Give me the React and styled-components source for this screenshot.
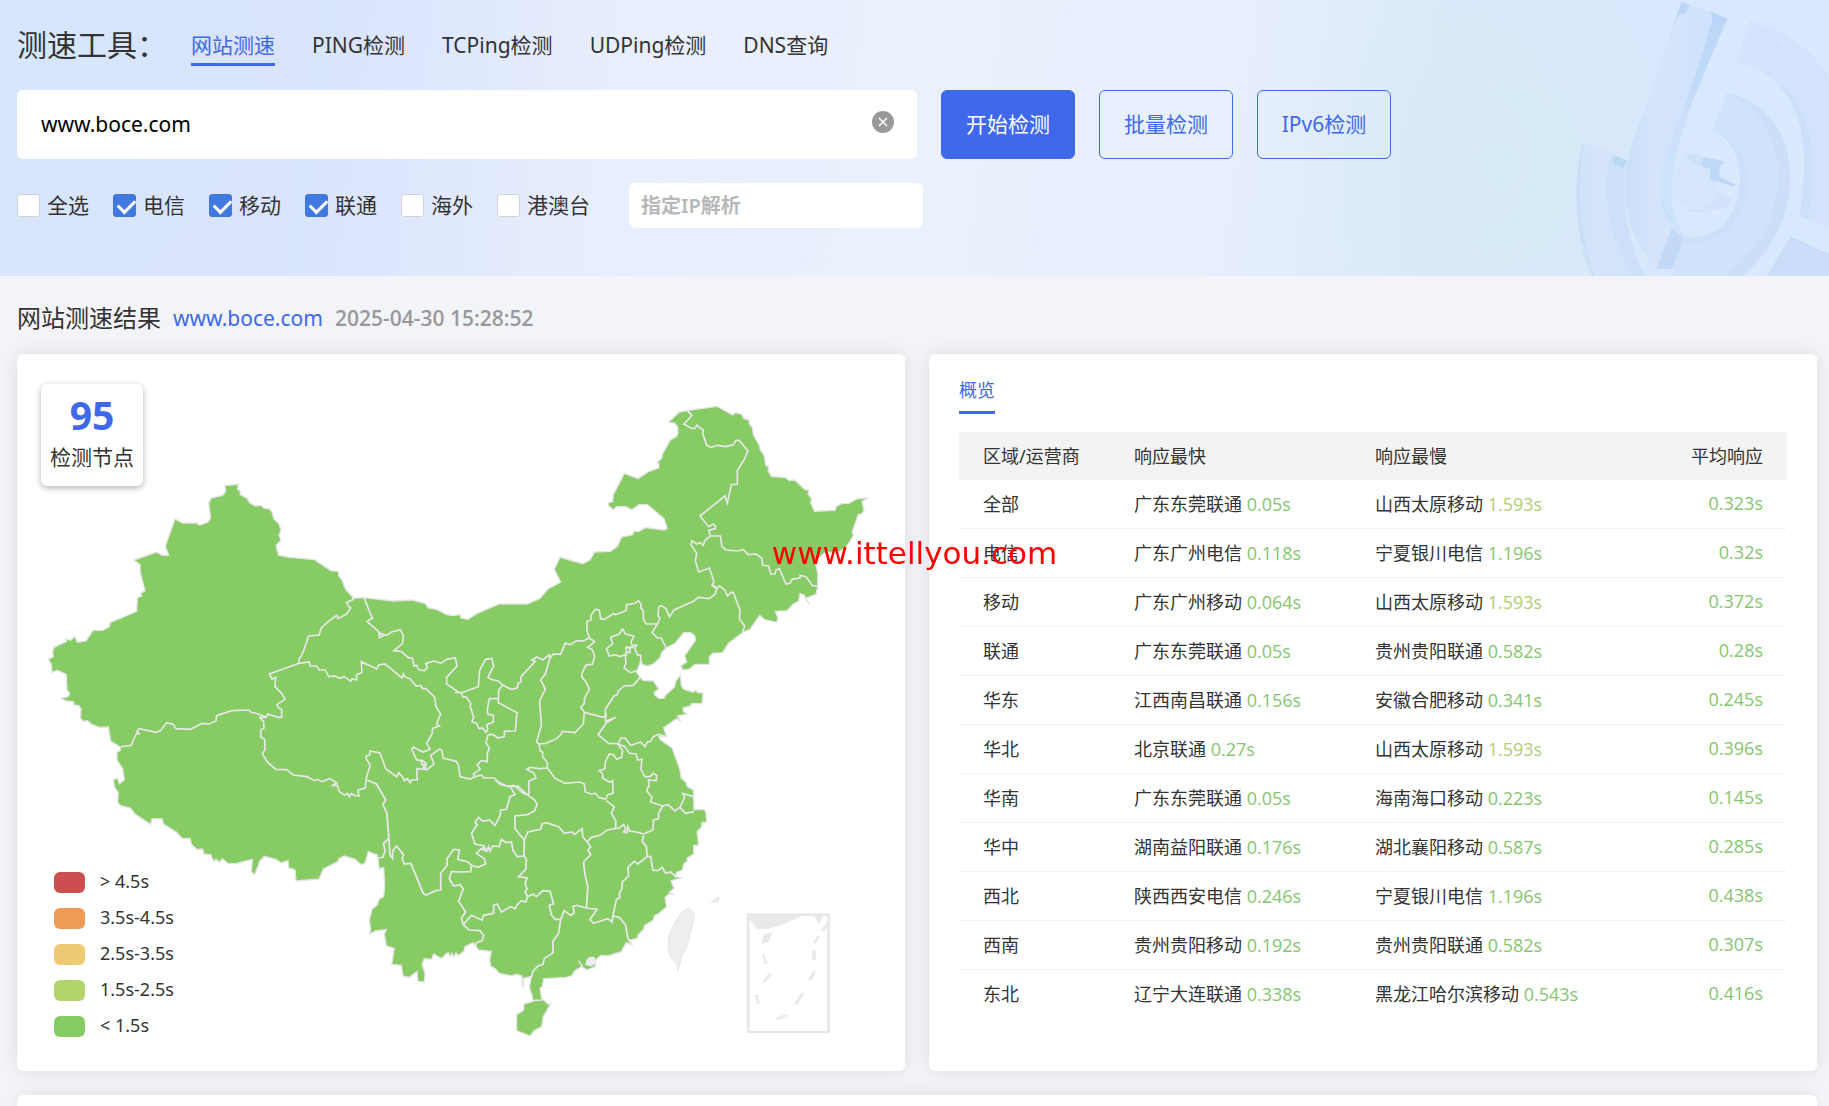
import { useState } from "react";
import styled, { createGlobalStyle } from "styled-components";

const tabs = ["网站测速", "PING检测", "TCPing检测", "UDPing检测", "DNS查询"];

const lines = ["电信", "移动", "联通", "海外", "港澳台"];

const levels = [
  { color: "#cb4f4f", text: "> 4.5s" },
  { color: "#ef9b55", text: "3.5s-4.5s" },
  { color: "#efca74", text: "2.5s-3.5s" },
  { color: "#b3d468", text: "1.5s-2.5s" },
  { color: "#86cb63", text: "< 1.5s" },
];

const rows = [
  { area: "全部", fast: ["广东东莞联通", 0.05], slow: ["山西太原移动", 1.593], avg: 0.323 },
  { area: "电信", fast: ["广东广州电信", 0.118], slow: ["宁夏银川电信", 1.196], avg: 0.32 },
  { area: "移动", fast: ["广东广州移动", 0.064], slow: ["山西太原移动", 1.593], avg: 0.372 },
  { area: "联通", fast: ["广东东莞联通", 0.05], slow: ["贵州贵阳联通", 0.582], avg: 0.28 },
  { area: "华东", fast: ["江西南昌联通", 0.156], slow: ["安徽合肥移动", 0.341], avg: 0.245 },
  { area: "华北", fast: ["北京联通", 0.27], slow: ["山西太原移动", 1.593], avg: 0.396 },
  { area: "华南", fast: ["广东东莞联通", 0.05], slow: ["海南海口移动", 0.223], avg: 0.145 },
  { area: "华中", fast: ["湖南益阳联通", 0.176], slow: ["湖北襄阳移动", 0.587], avg: 0.285 },
  { area: "西北", fast: ["陕西西安电信", 0.246], slow: ["宁夏银川电信", 1.196], avg: 0.438 },
  { area: "西南", fast: ["贵州贵阳移动", 0.192], slow: ["贵州贵阳联通", 0.582], avg: 0.307 },
  { area: "东北", fast: ["辽宁大连联通", 0.338], slow: ["黑龙江哈尔滨移动", 0.543], avg: 0.416 },
];

// 全国轮廓
const outline =
  "145,958 160,950 158,935 162,922 200,904 197,896 212,901 224,889 232,907 258,903 279,871 308,871 328,860 330,848 410,814 412,774 425,768 422,760 435,752 421,698 420,674 402,660 470,636 487,646 506,646 496,619 525,537 548,549 590,549 599,556 624,546 632,534 626,489 634,474 668,466 677,454 675,437 716,433 712,446 722,456 720,463 741,475 750,489 766,498 784,496 792,505 806,506 816,515 821,536 837,552 843,570 837,585 843,601 829,615 830,628 837,646 869,652 944,659 992,692 1015,694 1016,708 1024,717 1037,748 1058,771 " +
  "1060,775 1092,773 1180,783 1236,780 1275,790 1285,804 1312,809 1338,823 1358,827 1381,824 1383,834 1404,838 1430,821 1498,792 1581,792 1620,775 1644,747 1682,726 1663,688 1680,652 1748,671 1770,660 1784,636 1832,634 1853,618 1865,591 1898,584 1902,573 1915,575 1937,563 1992,570 2002,565 1992,536 1942,494 1917,494 1896,509 1877,500 1850,500 1840,509 1826,498 1825,488 1838,485 1840,464 1873,400 1914,416 1945,395 1976,384 1977,372 1972,368 1986,353 1987,343 2010,301 2030,289 2034,280 2033,260 2024,250 2006,246 2037,217 2060,212 2152,199 2198,225 2207,218 2225,223 2232,236 2248,241 2247,250 2257,263 2260,285 2279,318 2280,328 2293,348 2297,376 2306,380 2304,392 2315,410 2355,412 2368,422 2384,420 2415,449 2427,451 2424,461 2435,477 2432,488 2444,514 2506,511 2508,500 2525,491 2547,490 2570,477 2605,473 2586,484 2592,512 2586,521 2575,523 2557,575 2560,587 2540,620 2510,640 2478,635 2446,662 2453,700 2453,740 2448,763 2416,775 2428,792 2412,765 2400,760 2396,784 2380,792 2361,812 2326,814 2334,835 2330,847 2294,839 2279,826 2250,868 2230,876 2185,910 2168,938 2137,940 2128,952 2128,973 2085,973 2067,988 2048,990 2043,978 2060,966 2054,947 2086,902 2085,888 2072,878 2051,878 2025,910 1998,924 1985,938 1980,953 1960,972 1943,978 1927,974 1923,962 1909,996 1928,1021 1960,1023 1976,1047 1963,1056 1964,1065 1976,1075 1992,1075 1998,1064 2024,1040 2027,1024 2041,1005 2044,1038 2052,1048 2080,1057 2088,1050 2092,1057 2109,1060 2106,1091 2075,1090 2071,1098 2049,1103 2050,1115 2061,1122 2033,1128 2042,1145 2030,1136 1991,1163 2000,1190 1977,1190 1980,1198 2017,1225 2040,1290 2044,1315 2058,1327 2062,1340 2080,1350 2082,1409 2113,1409 2118,1418 " +
  "2120,1447 2106,1447 2105,1461 2091,1475 2096,1515 2081,1517 2081,1542 2061,1555 2062,1563 2051,1572 2047,1591 2029,1597 2027,1608 2044,1615 2027,1618 2013,1623 2022,1645 2008,1657 2023,1664 2006,1662 1995,1673 2000,1700 1977,1720 1963,1727 1960,1740 1933,1757 1931,1768 1914,1785 1911,1795 1890,1800 1896,1815 1879,1807 1864,1835 1824,1848 1802,1846 1787,1860 1785,1880 1761,1890 1749,1882 1736,1862 1746,1880 1724,1892 1716,1907 1699,1912 1631,1916 1627,1940 1620,1944 1625,1975 1648,1995 1654,1988 1629,2032 1625,2060 1602,2072 1590,2088 1550,2072 1550,2024 1571,2010 1572,1992 1599,1984 1596,1965 1588,1942 1594,1910 1569,1915 1571,1942 1566,1930 1566,1908 1550,1903 1534,1907 1498,1900 1486,1886 1472,1878 1469,1860 1474,1834 1436,1830 1419,1808 1395,1820 1392,1834 1374,1847 1368,1838 1361,1852 1356,1840 1350,1850 1345,1838 1337,1842 1325,1856 1301,1842 1295,1858 1273,1856 1266,1872 1275,1900 1273,1926 1254,1924 1251,1895 1227,1912 1209,1908 1204,1876 1175,1873 1183,1825 1159,1817 1153,1783 1159,1769 1127,1773 1108,1782 1112,1768 1108,1740 1116,1708 1131,1695 1138,1677 1151,1670 1154,1635 1151,1582 1138,1587 1132,1545 " +
  "1105,1535 1095,1570 1083,1574 1065,1557 1032,1548 1017,1556 1013,1565 970,1587 957,1617 888,1623 885,1589 866,1584 864,1562 844,1569 828,1558 793,1549 780,1562 764,1604 754,1595 757,1558 730,1565 710,1571 685,1571 667,1556 658,1567 648,1558 642,1566 632,1544 612,1542 608,1527 590,1528 575,1514 570,1495 547,1496 530,1477 490,1452 487,1437 456,1436 452,1453 407,1424 391,1404 362,1397 353,1387 355,1358 344,1342 340,1320 352,1314 358,1331 373,1320 368,1286 351,1260 351,1237 360,1232 362,1222 332,1203 325,1161 298,1162 275,1153 262,1142 250,1144 241,1135 243,1107 237,1097 222,1095 220,1085 198,1083 183,1074 205,1070 209,1060 201,1050 199,1003 172,991 156,997 154,972";

// 省界，按片区分组
const westBorders = [
  "1058,771 1060,778 1040,788 1045,798 1052,804 1040,822 1014,836 1010,826 985,844 964,864 957,885 926,888 908,940 897,958 897,970",
  "897,970 808,1002 816,1018 827,1012 825,1040 845,1060 855,1078 831,1094 836,1104 845,1108 845,1132 835,1132 803,1122 799,1132 778,1132",
  "800,1132 766,1119 753,1117 747,1110 695,1112 650,1127 648,1143 628,1152 605,1150 572,1168 528,1166 518,1152 500,1149 481,1172 469,1177 418,1166 412,1172 418,1184 412,1176 400,1200 394,1216 364,1220",
  "778,1132 791,1144 792,1164 782,1170 783,1192 794,1198 795,1228 787,1242 804,1268 828,1288 860,1289 880,1305 921,1310 944,1322 953,1318 966,1325 990,1316 1010,1328 998,1336 1012,1336 1018,1355 1035,1366 1042,1360 1048,1371 1053,1361 1064,1366 1077,1368 1074,1350 1096,1344 1098,1318",
  "1098,1318 1103,1300 1111,1276 1098,1255 1098,1248 1109,1246 1110,1233 1140,1239 1157,1286 1190,1310 1196,1298 1209,1312 1213,1322 1222,1316 1231,1328 1234,1320 1252,1320 1250,1286 1275,1288 1278,1274 1265,1274 1265,1262 1250,1260 1235,1228 1240,1222 1269,1236 1290,1228 1280,1210 1296,1182 1298,1165 1318,1158 1310,1152 1322,1122 1308,1100 1304,1072 1278,1046 1268,1046 1262,1036 1248,1038 1230,1016 1214,1010 1210,1002 1206,1014 1165,980 1154,972 1136,975 1130,987 1084,965 1086,998 1070,1004 1070,1020 1056,1016 1052,1024 1033,1010 1020,1015 1005,1008 986,1010 976,990 957,990 950,978 930,978 928,966 897,970",
  "1092,773 1117,835 1101,844 1137,876 1138,893 1148,888 1140,880 1160,886 1174,876 1201,869 1210,886 1208,910 1182,932 1203,934 1226,954 1237,954 1242,978 1250,976 1257,990 1274,992 1282,982 1277,970 1303,963 1322,970 1340,958 1366,953 1371,978 1340,1012 1340,1032 1378,1058",
];

const northBorders = [
  "345,398 365,398 415,380 419,330 437,298 455,295 461,318 444,352 452,358 475,363 488,375",
  "488,375 476,390 475,428 531,458 526,513 493,514 493,530 473,534 460,524 444,524",
  "365,398 368,410 380,412 393,432 390,438 401,470 396,485 410,490 417,506 428,504 438,517 443,508 440,494 460,486 460,466 443,462 442,448 448,416 475,416",
  "488,375 512,388 532,384 534,370 543,366 543,350 586,304 576,300 590,291 608,300 629,284 629,296",
  "629,296 616,342 602,360 616,387 599,422 604,495 590,546 597,552",
  "629,296 640,282 662,283 675,250 692,254 710,242 730,243 748,234",
  "748,234 764,245 743,262 758,270 764,290 757,313 737,316 726,340 726,352 738,366 748,388 733,416 733,430 722,442 733,457",
  "733,457 730,492 705,518 666,514 664,522 650,536 617,550 597,552",
  "733,457 790,472 798,464 796,484 827,472 800,488 774,524 806,550 833,551",
  "796,468 796,448 822,408 832,404 835,393 852,378 880,376 900,352",
  "835,550 843,534 855,534 872,556 885,552 902,546 915,560 922,546 932,544 940,530 955,523 978,530",
  "444,524 438,548 448,565 442,580 442,605 424,602 412,614 420,628 400,642 404,650 425,645",
  "404,650 390,657 360,650 356,618 349,604 309,594 306,572 299,567 272,586 282,612 260,630 250,622 258,610 248,602 232,600",
  "425,645 430,654 463,654 475,666 505,680 520,676 526,680 552,702 567,703",
  "567,703 566,664 588,654 582,640 560,628 570,622 600,626 622,624",
  "597,552 600,572 608,576 608,590 622,608 622,624",
  "622,624 646,656 676,670 720,666 733,672 736,696 752,702 766,700 776,712 798,718",
  "798,718 803,704 819,700 818,662 808,666 788,654 788,642 778,632 795,626 796,606 808,582 820,584 830,598 845,592 848,572 833,551",
  "833,551 855,560 868,580 888,582 893,600 906,598 903,628 914,650 930,650 940,640 950,646 949,662 925,660 928,674 920,692 936,712 932,726 968,738",
  "968,738 985,734 1004,752 1020,742 1036,760 1062,755",
  "1020,742 1034,712 1028,700 1060,710",
  "848,206 856,222 882,228 873,246 878,262 858,262 860,284 838,290 828,284 808,288 799,266 818,252 812,232 838,222 848,206",
  "858,262 870,264 870,278 860,276 856,290 858,310 852,324 872,338 890,332",
  "878,256 890,256 884,264 892,284 902,286 902,304",
  "748,234 741,212 741,184 753,180 754,164 766,148 778,150 782,176 793,178 822,160 826,164 858,152 860,134 885,130 895,122 903,132 903,145 910,152 910,176 918,192 952,192",
];

const eastBorders = [
  "318,264 304,234 292,234 276,218 292,192 300,174 294,168 296,142 304,137 318,146 328,170 342,150 400,124 415,112 448,116 466,102 470,86 456,76",
  "470,86 478,78 495,90 502,108 512,98 520,98 540,150 538,176 554,198 548,216",
];

const northeastBorders = [
  "442,92 456,106 432,132 456,146 466,144 470,136 490,150 488,160 500,196 514,202 532,196 558,200 580,194 588,181 597,181 624,212 612,240 592,272 592,312 574,314 562,370 555,348 480,408 506,440 520,432 526,438 526,446 506,452 511,468",
  "511,468 541,468 546,500 558,510 594,513 610,508 624,524 648,522 665,534 668,556 686,558 692,582 705,582 708,570 718,566 738,612 750,610 756,598 780,594 780,586 798,590 818,618 835,618",
  "511,468 494,482 490,496 480,488 470,492 456,482 453,494 470,520 466,542 476,576 508,564 522,604 516,616 530,622",
];

const southBorders = [
  "75,0 102,12 128,60 120,74 131,98 137,175 140,225 147,235 148,212 158,198 178,224 174,236 180,252 198,250 214,290 232,338 240,346 268,332 282,330 282,280 300,256 300,236 318,208 334,210 330,238 358,246 368,256",
  "137,175 122,190 126,212 120,232 106,234",
  "368,256 366,275 330,276 312,274 306,296 318,318 336,314 345,326 332,364 352,396 340,414 345,434",
  "368,256 386,262 408,252 404,236 382,220 396,206 406,212",
  "406,212 404,198 378,192 368,160 384,134 378,128 388,112 400,124 418,120 434,136 448,108 450,90 466,88 476,50 490,44 478,22",
  "400,200 410,214 416,200 420,214 428,198 446,200 452,178 464,188 480,186 484,210 496,230 515,228",
  "435,0 450,14 478,20 498,18 524,44 545,60 552,74 545,92 524,104 490,108 490,146 516,180",
  "516,180 526,156 562,148 566,132 578,128 612,140 628,160 650,156 656,164 678,146 680,170 692,186",
  "516,180 515,228 522,238 520,268 500,290 524,294 518,310 524,328 518,334 525,350",
  "525,350 520,366 508,362 498,372 490,386 478,380 452,396 440,372 430,376 430,400 402,406 398,420 368,406 345,434",
  "345,434 362,450 392,452 402,466 398,482 382,488 380,500",
  "525,350 540,342 550,350 568,332 588,334 598,372 586,376 592,404 602,418 618,418",
  "618,418 612,460 596,484 597,518 572,536 568,554 554,558 540,574 536,592",
  "618,418 628,392 646,406 656,398 652,380 664,376 690,384",
  "692,186 702,200 694,210 702,224 682,246 686,284 694,320 690,384",
  "690,384 720,388 700,418 710,430 750,416 762,426 764,408",
  "692,186 704,172 728,166 748,150 772,146",
  "772,146 772,122 760,100 768,80 745,62",
  "772,146 782,144 794,134 800,146 794,156 804,158 806,140 812,154 830,156 850,162",
  "850,162 876,150 878,120 892,116 892,100 904,78",
  "850,166 846,184 858,200 860,230",
  "860,230 834,252 824,244 806,262 808,288 790,306 790,324 782,340 784,352 774,358 764,408",
  "860,230 870,230 876,270 890,272 902,262 912,280 926,276 942,292",
  "764,408 782,412 800,436 806,474 815,490",
  "540,662 564,660 568,656",
];

// 南海诸岛
const islands = [
  "1143,414 1158,402 1300,404 1248,430 1196,448 1168,446",
  "1326,404 1354,404 1341,434",
  "1186,464 1212,456 1200,486 1180,492",
  "1182,522 1188,522 1197,551 1190,551",
  "1198,582 1210,582 1190,608 1182,608",
  "1160,645 1170,645 1176,671 1168,671",
  "1214,719 1240,705 1255,705 1232,719",
  "1270,674 1292,638 1302,638 1280,674",
  "1310,600 1324,574 1333,574 1321,600",
  "1322,510 1332,510 1332,539 1322,539",
  "1324,490 1336,468 1344,468 1332,490",
  "1345,453 1366,422 1366,440 1355,453",
];

function Borders({ items, transform }) {
  return (
    <g transform={transform}>
      {items.map((points) => (
        <polyline key={points} points={points} />
      ))}
    </g>
  );
}

function ChinaMap() {
  return (
    <Map viewBox="51 42 2664 2151" role="img" aria-label="检测节点地图">
      <polygon points={outline} fill="#86cb63" stroke="#e4e4e4" strokeWidth="4" />
      <g fill="none" stroke="#e8e8e8" strokeWidth="5">
        <Borders items={westBorders} />
        <Borders items={northBorders} transform="translate(1020 660)" />
        <Borders items={eastBorders} transform="translate(1680 660)" />
        <Borders items={northeastBorders} transform="translate(1620 120)" />
        <Borders items={southBorders} transform="translate(1020 1320) scale(1.0714 1)" />
      </g>
      <g transform="translate(1020 1320) scale(1.0714 1)">
        <g fill="#eeeeee" stroke="#e6e6e6" strokeWidth="3">
          <polygon points="976,384 993,402 986,440 978,470 970,504 956,530 952,550 946,572 944,550 926,532 919,506 920,470 938,428 956,398" />
          <polygon points="1040,367 1060,350 1060,364" />
          <polygon points="692,538 700,532 712,532 716,548 704,558 688,554" />
        </g>
        <g fill="#e9e9e9">
          {islands.map((points) => (
            <polygon key={points} points={points} />
          ))}
        </g>
        <rect x="1143" y="404" width="225" height="352" fill="none" stroke="#e6e6e6" strokeWidth="7" />
      </g>
    </Map>
  );
}

function HeroArt() {
  return (
    <Art viewBox="0 0 867 828" aria-hidden="true">
      <defs>
        <linearGradient id="bar" x1="0" y1="0" x2="1" y2="0">
          <stop offset="0" stopColor="#cbdff8" />
          <stop offset="0.3" stopColor="#d4e4fb" />
          <stop offset="1" stopColor="#cfe2fb" />
        </linearGradient>
        <linearGradient id="edge" x1="0" y1="0" x2="0" y2="1">
          <stop offset="0" stopColor="#b4d1f7" />
          <stop offset="0.35" stopColor="#bad7f9" />
          <stop offset="0.45" stopColor="#cbdcf8" />
          <stop offset="0.7" stopColor="#c8e3fa" />
          <stop offset="1" stopColor="#cfe4fb" />
        </linearGradient>
      </defs>
      <path d="M128 430Q200 440 258 485Q238 660 312 828H152Q78 640 128 430Z" fill="url(#bar)" opacity="0.8" />
      <path d="M210 470Q170 660 282 828H312Q232 660 258 485Z" fill="#c8ddf9" opacity="0.6" />
      <path d="M128 430Q90 640 160 828" fill="none" stroke="#bfd6f5" strokeWidth="4" opacity="0.6" />
      <path d="M218 466L262 482L250 505L224 494Z" fill="#b9d9f5" />
      <path d="M630 62Q780 100 867 230V685L778 648Q830 350 700 240Q650 200 590 185Z" fill="#d1e2fb" opacity="0.9" />
      <path d="M700 240Q830 350 778 648L802 658Q850 400 750 280Z" fill="#c8dbf8" opacity="0.5" />
      <path d="M560 278Q740 330 750 520Q755 700 600 828H395L430 712Q590 720 600 540Q600 430 518 392Z" fill="#d1e2fb" />
      <path d="M560 278Q700 330 715 520Q715 700 560 828H610Q755 700 750 520Q740 320 560 278Z" fill="#c8dbf8" opacity="0.5" />
      <path d="M518 392Q600 430 600 540Q590 720 430 712L422 730Q610 740 622 540Q615 420 518 392Z" fill="#c9dcf8" opacity="0.5" />
      <path d="M424 5L562 56L480 250Q400 440 395 560Q390 660 440 712L395 808L350 806Q250 700 256 540Q262 440 320 320L400 80Z" fill="url(#bar)" />
      <path d="M520 45L562 56L480 250Q400 440 395 560Q390 650 430 700L395 672Q355 620 362 540Q380 440 440 300L488 160Z" fill="url(#edge)" opacity="0.7" />
      <path d="M424 5L450 15L436 40L416 45L400 80Z" fill="#bdd5f6" />
      <path d="M508 32L562 56L550 64L524 66Z" fill="#bcd3f7" />
      <path d="M395 685L432 716L396 808L350 806Z" fill="#c4d9f8" />
      <path d="M365 600Q375 640 400 665" fill="none" stroke="#bde0f8" strokeWidth="8" opacity="0.5" />
      <circle cx="465" cy="550" r="72" fill="#d5e6fa" />
      <path d="M430 472Q460 455 490 470L486 500Q450 480 430 472Z" fill="#cadcf7" opacity="0.6" />
      <path d="M490 470L555 485L540 500L538 530L585 552L580 560L530 542L510 542L512 506L486 500Z" fill="#b7d1f5" opacity="0.7" />
      <path d="M530 575L580 600L560 620L470 640L440 628Q500 635 530 590Z" fill="#c9dcf8" opacity="0.5" />
      <path d="M750 712L867 765V828H680Z" fill="#cbdef9" />
      <path d="M750 712L867 765" stroke="#b9d1f4" strokeWidth="4" opacity="0.6" />
    </Art>
  );
}

const speedColor = (n) => (n < 1.5 ? "#86c56f" : "#b0ce73");

export default function App() {
  const [url, setUrl] = useState("www.boce.com");
  const [ip, setIp] = useState("");
  const [tab, setTab] = useState(tabs[0]);
  const [picked, setPicked] = useState(["电信", "移动", "联通"]);

  const toggle = (name) => {
    setPicked(picked.includes(name) ? picked.filter((x) => x !== name) : [...picked, name]);
  };
  const isAll = picked.length === lines.length;

  return (
    <Page>
      <GlobalStyle />
      <Hero>
        <HeroArt />
        <Nav>
          <Title>测速工具：</Title>
          {tabs.map((name) => (
            <TabLink href="#" key={name} $on={name === tab} onClick={() => setTab(name)}>
              {name}
            </TabLink>
          ))}
        </Nav>
        <SearchRow>
          <SearchBox>
            <SearchInput aria-label="检测网址" value={url} onChange={(e) => setUrl(e.target.value)} />
            <ClearButton type="button" aria-label="清空" onClick={() => setUrl("")}>
              <svg width="22" height="22" viewBox="0 0 22 22">
                <circle cx="11" cy="11" r="11" fill="#999999" />
                <path d="M7 7L15 15M15 7L7 15" stroke="#ffffff" strokeWidth="1.5" />
              </svg>
            </ClearButton>
          </SearchBox>
          <Button type="button" $primary>开始检测</Button>
          <Button type="button">批量检测</Button>
          <Button type="button">IPv6检测</Button>
        </SearchRow>
        <FilterRow>
          <CheckLabel>
            <Checkbox type="checkbox" checked={isAll} onChange={() => setPicked(isAll ? [] : lines)} />
            <span>全选</span>
          </CheckLabel>
          {lines.map((name) => (
            <CheckLabel key={name}>
              <Checkbox type="checkbox" checked={picked.includes(name)} onChange={() => toggle(name)} />
              <span>{name}</span>
            </CheckLabel>
          ))}
          <IpInput aria-label="指定IP解析" placeholder="指定IP解析" value={ip} onChange={(e) => setIp(e.target.value)} />
        </FilterRow>
      </Hero>

      <Result>
        <ResultHead>
          <ResultTitle>网站测速结果</ResultTitle>
          <Domain href="#">www.boce.com</Domain>
          <TimeText>2025-04-30 15:28:52</TimeText>
        </ResultHead>
        <Cards>
          <Card>
            <ChinaMap />
            <NodeCount>
              <b>95</b>
              <span>检测节点</span>
            </NodeCount>
            <Legend>
              {levels.map((l) => (
                <LegendItem key={l.text} $color={l.color}>
                  <span>{l.text}</span>
                </LegendItem>
              ))}
            </Legend>
          </Card>
          <Card>
            <Overview>
              <OverviewTab type="button">概览</OverviewTab>
              <Table>
                <thead>
                  <tr>
                    <Th $width="151px">区域/运营商</Th>
                    <Th $width="241px">响应最快</Th>
                    <Th>响应最慢</Th>
                    <Th $width="150px" $right>平均响应</Th>
                  </tr>
                </thead>
                <tbody>
                  {rows.map((r) => (
                    <tr key={r.area}>
                      <Td>{r.area}</Td>
                      <Td>{r.fast[0]} <Speed $n={r.fast[1]}>{r.fast[1]}s</Speed></Td>
                      <Td>{r.slow[0]} <Speed $n={r.slow[1]}>{r.slow[1]}s</Speed></Td>
                      <Td $right><Speed $n={r.avg}>{r.avg}s</Speed></Td>
                    </tr>
                  ))}
                </tbody>
              </Table>
            </Overview>
          </Card>
        </Cards>
        <NextCard />
      </Result>
      <Watermark>www.ittellyou.com</Watermark>
    </Page>
  );
}

const GlobalStyle = createGlobalStyle`
  * {
    box-sizing: border-box;
  }
  body {
    margin: 0;
    color: #333;
    background: #f3f4f9;
    font-family: "Noto Sans", "Noto Sans CJK SC", sans-serif;
    font-size: 18px;
  }
  button, input {
    font-family: inherit;
  }
`

const Page = styled.div`
  min-height: 100vh;
  display: flex;
  flex-direction: column;
`

const Hero = styled.header`
  position: relative;
  height: 276px;
  padding: 18px 12px 0 17px;
  background:
    radial-gradient(ellipse 200px 260px at 82% 60%, rgba(214, 234, 244, 0.9) 0, rgba(214, 234, 244, 0) 100%),
    radial-gradient(circle at 0% 20%, #d5e6fd 0, rgba(213, 230, 253, 0) 300px),
    linear-gradient(98deg, #dae5fa 0%, #d9e4fd 18%, #e8eefd 34%, #eaf0fc 50%, #e8effd 66%, #dceafb 77%, #d8e8fd 88%);
`

const Art = styled.svg`
  position: absolute;
  right: 0;
  bottom: 0;
  height: 100%;
`

const Nav = styled.nav`
  position: relative;
  display: flex;
  align-items: center;
  height: 54px;
  gap: 37px;
`

const Title = styled.h1`
  margin: 0 -13px 0 0;
  padding-bottom: 4px;
  font-size: 30px;
  font-weight: 400;
`

const TabLink = styled.a`
  height: 39px;
  line-height: 36px;
  font-size: 21px;
  margin-top: 3px;
  text-decoration: none;
  color: ${(p) => (p.$on ? "#4068ea" : "#333")};
  border-bottom: 3px solid ${(p) => (p.$on ? "#4068ea" : "transparent")};
`

const SearchRow = styled.div`
  position: relative;
  display: flex;
  gap: 24px;
  margin-top: 18px;
`

const SearchBox = styled.div`
  flex: 0 1 900px;
  height: 69px;
  display: flex;
  align-items: center;
  padding: 0 23px 2px 24px;
  background: #fff;
  border-radius: 6px;
`

const SearchInput = styled.input`
  flex: 1;
  min-width: 0;
  padding: 0;
  border: 0;
  outline: 0;
  font-size: 21px;
  color: #000;
  background: transparent;
`

const ClearButton = styled.button`
  display: flex;
  padding: 0 0 4px;
  border: 0;
  background: none;
  cursor: pointer;
`

const Button = styled.button`
  width: 134px;
  height: 69px;
  padding: 0 0 4px;
  font-size: 21px;
  border: 1px solid #4068ea;
  border-radius: 6px;
  color: ${(p) => (p.$primary ? "#fff" : "#4068ea")};
  background: ${(p) => (p.$primary ? "#4068ea" : "transparent")};
  cursor: pointer;
`

const FilterRow = styled.div`
  position: relative;
  display: flex;
  align-items: center;
  gap: 24px;
  margin-top: 24px;
`

const CheckLabel = styled.label`
  display: flex;
  align-items: center;
  gap: 7px;
  font-size: 21px;
  line-height: 30px;
  span {
    padding-bottom: 2px;
  }
`

const Checkbox = styled.input`
  appearance: none;
  position: relative;
  width: 23px;
  height: 23px;
  margin: 0;
  border: 1px solid #d2d2d2;
  border-radius: 3px;
  background: #fff;
  &:checked {
    border-color: #4179e1;
    background: #4179e1;
  }
  &:checked::after {
    content: "";
    position: absolute;
    left: 4px;
    top: 4px;
    width: 14px;
    height: 8px;
    border-left: 3px solid #fff;
    border-bottom: 3px solid #fff;
    transform: rotate(-45deg);
  }
`

const IpInput = styled.input`
  width: 294px;
  height: 45px;
  margin-left: 15px;
  padding: 0 12px;
  border: 0;
  border-radius: 6px;
  outline: 0;
  font-size: 20px;
  background: #fff;
  &::placeholder {
    color: #b8b8b8;
    font-weight: 600;
  }
`

const Result = styled.main`
  flex: 1;
  display: flex;
  flex-direction: column;
  padding: 0 12px 0 17px;
`

const ResultHead = styled.div`
  display: flex;
  align-items: center;
  gap: 12px;
  height: 78px;
  padding-top: 6px;
  font-size: 21px;
`

const ResultTitle = styled.h2`
  margin: 0;
  padding-bottom: 3px;
  font-size: 24px;
  font-weight: 400;
`

const Domain = styled.a`
  color: #4068ea;
  text-decoration: none;
`

const TimeText = styled.time`
  color: #999;
  font-family: "Open Sans", "Noto Sans", sans-serif;
  font-weight: 600;
`

const Cards = styled.div`
  display: grid;
  grid-template-columns: 1fr 1fr;
  gap: 24px;
`

const Card = styled.section`
  position: relative;
  background: #fff;
  border-radius: 6px;
  box-shadow: 0 0 18px rgba(0, 0, 0, 0.1);
`

const NextCard = styled.section`
  flex: 1;
  margin-top: 24px;
  background: #fff;
  border-radius: 6px 6px 0 0;
  box-shadow: 0 0 18px rgba(0, 0, 0, 0.1);
`

const Map = styled.svg`
  display: block;
  width: 100%;
`

const NodeCount = styled.div`
  position: absolute;
  left: 24px;
  top: 30px;
  width: 102px;
  height: 102px;
  display: flex;
  flex-direction: column;
  align-items: center;
  justify-content: center;
  border-radius: 6px;
  background: #fff;
  box-shadow: 0 2px 6px rgba(0, 0, 0, 0.3);
  b {
    font-size: 39px;
    line-height: 44px;
    color: #4068ea;
  }
  span {
    font-size: 21px;
    line-height: 40px;
  }
`

const Legend = styled.ul`
  position: absolute;
  left: 37px;
  bottom: 27px;
  margin: 0;
  padding: 0;
  list-style: none;
`

const LegendItem = styled.li`
  display: flex;
  align-items: center;
  gap: 15px;
  height: 36px;
  &::before {
    content: "";
    width: 31px;
    height: 21px;
    border-radius: 6px;
    background: ${(p) => p.$color};
  }
  span {
    padding-bottom: 3px;
  }
`

const Overview = styled.div`
  padding: 18px 30px 30px;
`

const OverviewTab = styled.button`
  display: block;
  height: 42px;
  padding: 0 0 6px;
  margin-bottom: 18px;
  border: 0;
  border-bottom: 3px solid #4068ea;
  font-size: 18px;
  color: #4068ea;
  background: none;
`

const Table = styled.table`
  width: 100%;
  table-layout: fixed;
  border-collapse: separate;
  border-spacing: 0;
`

const Th = styled.th`
  width: ${(p) => p.$width || "auto"};
  height: 48px;
  padding: 0 24px 3px;
  font-weight: 400;
  white-space: nowrap;
  text-align: ${(p) => (p.$right ? "right" : "left")};
  background: #f3f3f3;
`

const Td = styled.td`
  height: 49px;
  padding: 0 24px 3px;
  white-space: nowrap;
  text-align: ${(p) => (p.$right ? "right" : "left")};
  border-bottom: 1px solid #f3f3f3;
  tr:last-child & {
    border-bottom: 0;
  }
`

const Speed = styled.span`
  color: ${(p) => speedColor(p.$n)};
  font-family: "Open Sans", "Noto Sans", sans-serif;
  font-weight: 500;
`

const Watermark = styled.div`
  position: fixed;
  inset: 0;
  display: flex;
  align-items: center;
  justify-content: center;
  font-family: "Trebuchet MS", "DejaVu Sans", sans-serif;
  font-size: 31px;
  color: #f00;
  pointer-events: none;
`
